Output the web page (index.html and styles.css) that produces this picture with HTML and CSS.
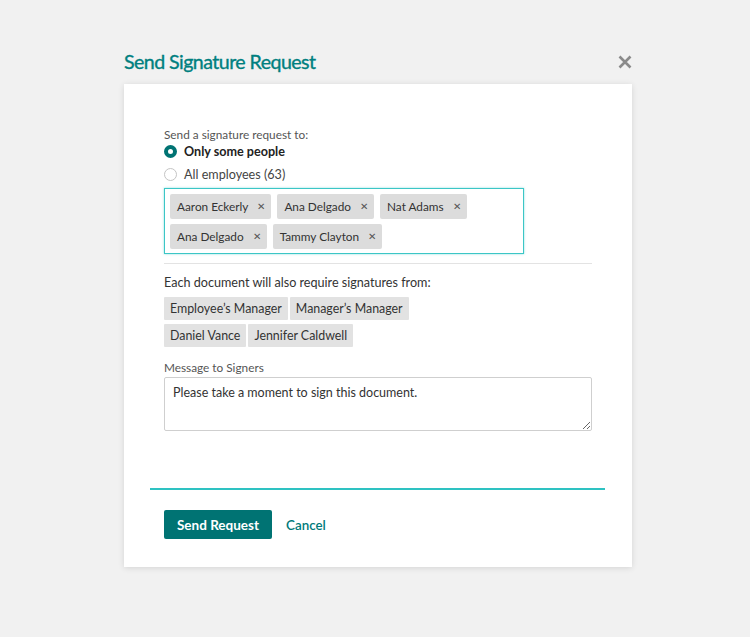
FILE: index.html
```html
<!DOCTYPE html>
<html>
<head>
<meta charset="utf-8">
<link rel="stylesheet" href="styles.css">
</head>
<body>
<div class="modal">
  <div class="modal-head">
    <h1 class="title">Send Signature Request</h1>
    <button class="close" aria-label="Close">
      <svg width="14" height="14" viewBox="0 0 14 14"><path d="M1.5 1.5 L12.5 12.5 M12.5 1.5 L1.5 12.5" stroke="#8a8a8a" stroke-width="2.6" stroke-linecap="butt"/></svg>
    </button>
  </div>
  <div class="card">
    <div class="body">
      <div class="small-label">Send a signature request to:</div>
      <label class="radio-row selected"><span class="radio on"></span>Only some people</label>
      <label class="radio-row"><span class="radio"></span>All employees (63)</label>
      <div class="tag-input">
        <span class="tag">Aaron Eckerly<span class="x">&#x2715;</span></span>
        <span class="tag">Ana Delgado<span class="x">&#x2715;</span></span>
        <span class="tag">Nat Adams<span class="x">&#x2715;</span></span>
        <span class="tag">Ana Delgado<span class="x">&#x2715;</span></span>
        <span class="tag">Tammy Clayton<span class="x">&#x2715;</span></span>
      </div>
      <div class="divider"></div>
      <div class="text">Each document will also require signatures from:</div>
      <div class="chips">
        <span class="chip">Employee’s Manager</span>
        <span class="chip">Manager’s Manager</span>
      </div>
      <div class="chips">
        <span class="chip">Daniel Vance</span>
        <span class="chip">Jennifer Caldwell</span>
      </div>
      <div class="msg-label">Message to Signers</div>
      <textarea class="message">Please take a moment to sign this document.</textarea>
    </div>
    <div class="footer">
      <button class="primary">Send Request</button>
      <a class="cancel" href="#">Cancel</a>
    </div>
  </div>
</div>
</body>
</html>
```

FILE: styles.css
```css
* { box-sizing: border-box; }
html, body { margin: 0; padding: 0; }
body {
  background: #f1f1f1;
  font-family: Lato, "Open Sans", sans-serif;
  color: #333;
  width: 750px;
  height: 637px;
}
.modal {
  width: 508px;
  margin-left: 124px;
  padding-top: 48px;
}
.modal-head {
  display: flex;
  justify-content: space-between;
  align-items: center;
  height: 28px;
  margin-bottom: 8px;
}
.title {
  margin: 0;
  font-size: 19.6px;
  font-weight: 400;
  letter-spacing: -0.55px;
  color: #007f7f;
  line-height: 28px;
  -webkit-text-stroke: 0.35px #007f7f;
}
.close {
  border: 0;
  background: none;
  padding: 0;
  width: 14px;
  height: 14px;
  margin-top: 0;
  display: flex;
}
.card {
  background: #fff;
  box-shadow: 0 1px 6px rgba(0,0,0,0.12);
  height: 483px;
}
.body {
  padding: 43px 40px 0 40px;
}
.small-label {
  font-size: 11.8px;
  line-height: 16px;
  color: #555;
}
.radio-row {
  display: flex;
  align-items: center;
  height: 20px;
  font-size: 12.6px;
  color: #444;
  gap: 7px;
  margin-top: 3px;
}
.radio-row.selected { font-weight: 700; color: #222; margin-top: -2px; }
.radio {
  width: 13px;
  height: 13px;
  border-radius: 50%;
  border: 1px solid #c4c4c4;
  background: #fff;
}
.radio.on {
  border: 4px solid #007373;
}
.tag-input {
  margin-top: 4px;
  width: 360px;
  border: 1px solid #3cc6c6;
  box-shadow: 0 0 2px rgba(60,198,198,0.6);
  padding: 5px 5px 0 5px;
  display: flex;
  flex-wrap: wrap;
  height: 66px;
  align-content: flex-start;
}
.tag {
  display: inline-flex;
  align-items: center;
  height: 25px;
  background: #dcdcdc;
  border-radius: 2px;
  font-size: 11.8px;
  color: #333;
  padding: 0 6px 0 7px;
  margin: 0 6px 5px 0;
}
.tag .x {
  font-size: 9.5px;
  color: #555;
  margin-left: 9px;
}
.divider {
  height: 1px;
  background: #e3e3e3;
  margin-top: 9px;
}
.text {
  font-size: 12.6px;
  line-height: 18px;
  color: #333;
  margin-top: 10px;
}
.chips {
  display: flex;
  gap: 2px;
  margin-top: 5px;
}
.chips + .chips { margin-top: 4px; }
.chip {
  height: 23px;
  line-height: 23px;
  padding: 0 6px;
  background: #e2e2e2;
  border-radius: 1px;
  font-size: 12.4px;
  color: #333;
}
.msg-label {
  margin-top: 13px;
  font-size: 11.8px;
  line-height: 16px;
  color: #555;
}
.message {
  display: block;
  margin-top: 1px;
  width: 428px;
  height: 54px;
  border: 1px solid #cfcfcf;
  border-radius: 2px;
  padding: 7px 8px;
  font-family: Lato, "Open Sans", sans-serif;
  font-size: 12.5px;
  color: #333;
  resize: vertical;
}
.footer {
  margin: 57px 27px 0 26px;
  border-top: 2px solid #2ec2c2;
  padding: 20px 14px 0 14px;
  display: flex;
  align-items: center;
  gap: 14px;
}
.primary {
  width: 108px;
  height: 29px;
  background: #007373;
  color: #fff;
  border: 0;
  border-radius: 2px;
  font-family: Lato, "Open Sans", sans-serif;
  font-weight: 700;
  font-size: 13.5px;
}
.cancel {
  color: #007a7a;
  text-decoration: none;
  font-size: 13.4px;
  font-weight: 600;
}
```
